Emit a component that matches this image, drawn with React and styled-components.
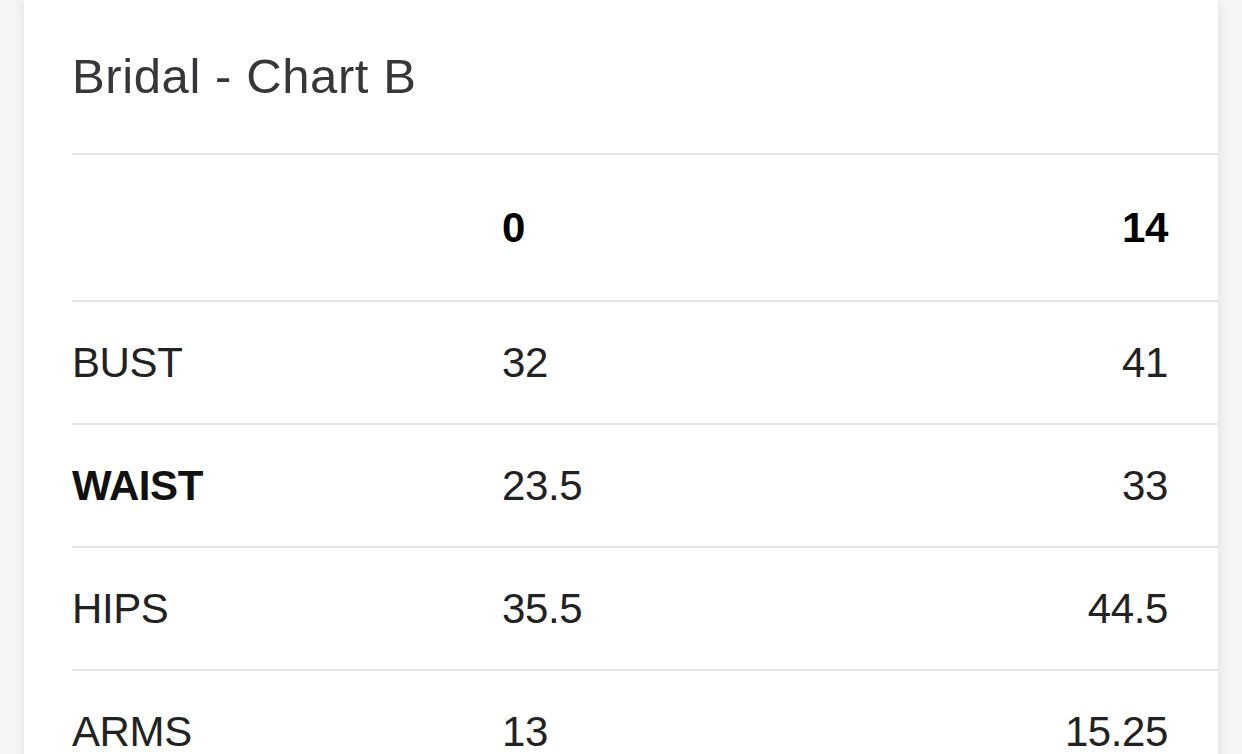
import React from "react";
import styled, { createGlobalStyle } from "styled-components";

const GlobalStyle = createGlobalStyle`
  html, body {
    margin: 0;
    padding: 0;
    background: #f6f6f7;
    overflow: hidden;
  }
  body {
    font-family: "Liberation Sans", Arial, Helvetica, sans-serif;
  }
`;

const Card = styled.section`
  margin: 0 24px;
  min-height: 100vh;
  background: #ffffff;
  box-shadow: 0 0 12px rgba(0, 0, 0, 0.1);
  padding: 48px 0 0 48px;
  box-sizing: border-box;
`;

const Title = styled.h2`
  margin: 0 0 49px 0;
  font-size: 49px;
  line-height: 56px;
  font-weight: 400;
  color: #36373a;
  letter-spacing: 0.6px;
`;

const Table = styled.div`
  display: flex;
  flex-direction: column;
`;

const Row = styled.div`
  display: grid;
  grid-template-columns: 430px 1fr 1fr;
  align-items: center;
  height: ${({ $header }) => ($header ? "145px" : "121px")};
  border-top: 2px solid #e4e4e4;
`;

const Cell = styled.div`
  font-size: 42px;
  letter-spacing: -0.4px;
  color: ${({ $bold }) => ($bold ? "#111111" : "#222222")};
  font-weight: ${({ $bold }) => ($bold ? 700 : 400)};
  text-align: ${({ $align }) => $align || "left"};
  padding-right: ${({ $align }) => ($align === "right" ? "50px" : "0")};
`;

const HeadCell = styled(Cell)`
  color: #000000;
  font-weight: 700;
`;

const sizes = ["0", "14"];

const rows = [
  { label: "BUST", values: ["32", "41"] },
  { label: "WAIST", values: ["23.5", "33"], bold: true },
  { label: "HIPS", values: ["35.5", "44.5"] },
  { label: "ARMS", values: ["13", "15.25"] },
];

export default function App() {
  return (
    <>
      <GlobalStyle />
      <Card>
        <Title>Bridal - Chart B</Title>
        <Table>
          <Row $header>
            <HeadCell />
            <HeadCell>{sizes[0]}</HeadCell>
            <HeadCell $align="right">{sizes[1]}</HeadCell>
          </Row>
          {rows.map((row) => (
            <Row key={row.label}>
              <Cell $bold={row.bold}>{row.label}</Cell>
              <Cell>{row.values[0]}</Cell>
              <Cell $align="right">{row.values[1]}</Cell>
            </Row>
          ))}
        </Table>
      </Card>
    </>
  );
}
